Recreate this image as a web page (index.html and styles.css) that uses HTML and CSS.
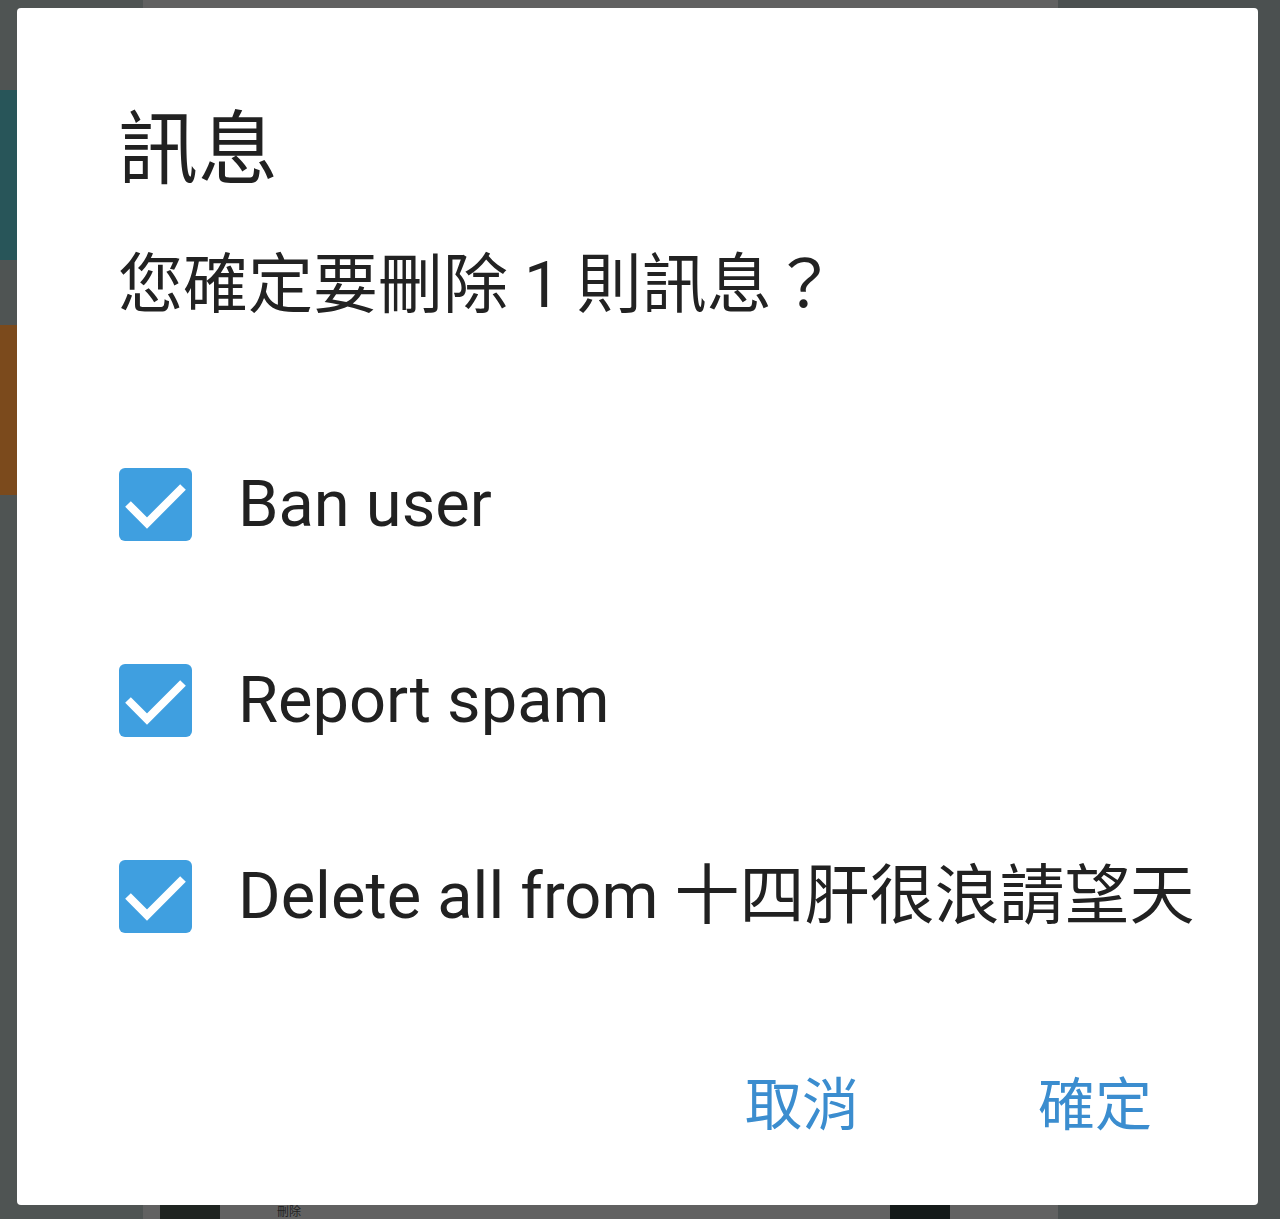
FILE: index.html
```html
<!DOCTYPE html>
<html lang="zh-Hant">
<head>
 <meta charset="utf-8">
 <title>訊息</title>
 <link rel="stylesheet" href="styles.css">
</head>
<body>

 <div class="backdrop">
 <div class="col col-left">
 <div class="tile tile-teal"></div>
 <div class="tile tile-orange"></div>
 </div>
 <div class="col col-mid">
 <div class="mid-foot">
 <span class="thumb"></span>
 <span class="foot-text">刪除</span>
 <span class="thumb thumb-right"></span>
 </div>
 </div>
 <div class="col col-right"></div>
 </div>

 <div class="dialog">
 <h2 class="dialog-title">訊息</h2>
 <p class="dialog-message">您確定要刪除 1 則訊息？</p>

 <div class="options">
 <label class="option">
 <span class="checkbox">
 <svg width="73" height="73" viewBox="0 0 73 73"><polyline points="9,36 28,55 64,19" /></svg>
 </span>
 <span class="option-text">Ban user</span>
 </label>
 <label class="option">
 <span class="checkbox">
 <svg width="73" height="73" viewBox="0 0 73 73"><polyline points="9,36 28,55 64,19" /></svg>
 </span>
 <span class="option-text">Report spam</span>
 </label>
 <label class="option">
 <span class="checkbox">
 <svg width="73" height="73" viewBox="0 0 73 73"><polyline points="9,36 28,55 64,19" /></svg>
 </span>
 <span class="option-text">Delete all from 十四肝很浪請望天</span>
 </label>
 </div>

 <div class="actions">
 <button class="action-btn">取消</button>
 <button class="action-btn">確定</button>
 </div>
 </div>

</body>
</html>
```

FILE: styles.css
```css
 body {
 margin: 0;
 padding: 0;
 width: 1280px;
 height: 1219px;
 overflow: hidden;
 background: #5f5f5f;
 font-family: Roboto, "Noto Sans CJK TC", sans-serif;
 color: #212121;
 }

 /* dimmed screen behind the dialog */
 .backdrop {
 display: flex;
 height: 1219px;
 }

 .col {
 height: 100%;
 }

 .col-left {
 width: 143px;
 background: #4f5453;
 display: flex;
 flex-direction: column;
 padding-top: 90px;
 box-sizing: border-box;
 }

 .tile {
 height: 170px;
 }

 .tile-teal { background: #285559; }
 .tile-orange { background: #7b4a1c; margin-top: 65px; }

 .col-mid {
 width: 915px;
 background: #616161;
 display: flex;
 flex-direction: column;
 justify-content: flex-end;
 }

 .mid-foot {
 display: flex;
 align-items: flex-end;
 height: 14px;
 padding-left: 17px;
 }

 .thumb {
 width: 60px;
 height: 14px;
 background: #1f2421;
 }

 .thumb-right {
 margin-left: 535px;
 background: #141a19;
 }

 .foot-text {
 margin-left: 57px;
 width: 78px;
 font-size: 12px;
 line-height: 14px;
 height: 14px;
 color: #222;
 }

 .col-right {
 flex: 1;
 background: #4b5050;
 }

 .dialog {
 position: absolute;
 left: 17px;
 top: 8px;
 width: 1241px;
 height: 1197px;
 background: #fff;
 border-radius: 4px;
 box-sizing: border-box;
 padding: 94px 0 77px 101px;
 display: flex;
 flex-direction: column;
 }

 .dialog-title {
 margin: 0;
 font-family: "Noto Sans CJK TC", sans-serif;
 font-weight: normal;
 font-size: 80px;
 line-height: 80px;
 }

 .dialog-message {
 margin: 71px 0 0;
 font-size: 65px;
 line-height: 64px;
 color: #222;
 }

 .options {
 margin-top: 151px;
 display: flex;
 flex-direction: column;
 gap: 123px;
 }

 .option {
 display: flex;
 align-items: center;
 height: 73px;
 }

 .checkbox {
 width: 73px;
 height: 73px;
 margin-left: 1px;
 border-radius: 6px;
 background: #3f9fe0;
 flex: none;
 }

 .checkbox svg {
 display: block;
 }

 .checkbox polyline {
 fill: none;
 stroke: #fff;
 stroke-width: 8;
 }

 .option-text {
 margin-left: 46px;
 font-size: 65px;
 line-height: 73px;
 white-space: nowrap;
 }

 .actions {
 margin-top: auto;
 display: flex;
 justify-content: flex-end;
 gap: 179px;
 padding-right: 106px;
 }

 .action-btn {
 border: none;
 background: none;
 padding: 0;
 font-family: "Noto Sans CJK TC", sans-serif;
 font-size: 57px;
 line-height: 56px;
 color: #3b8dcf;
 cursor: pointer;
 }
```
